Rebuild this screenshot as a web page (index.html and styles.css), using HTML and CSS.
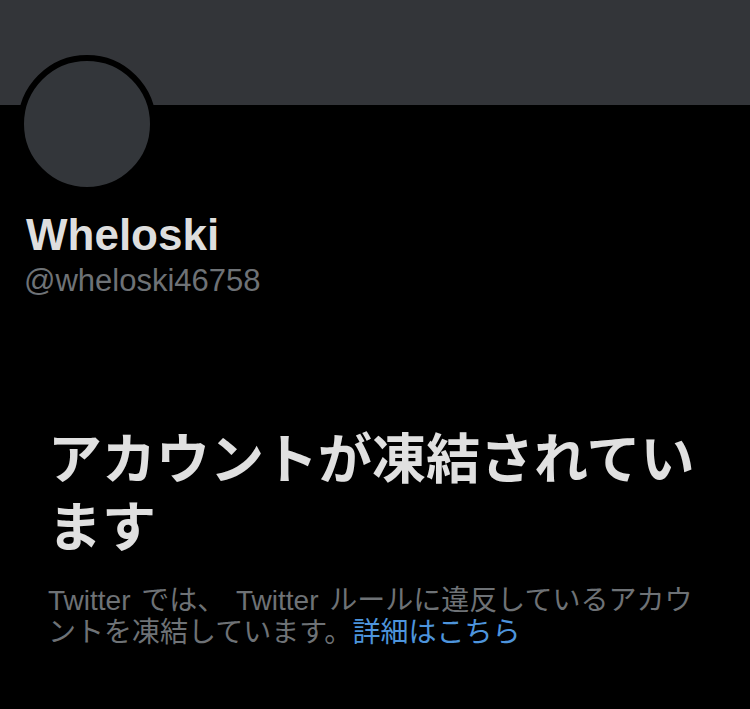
FILE: index.html
```html
<!DOCTYPE html>
<html lang="ja">
<head>
    <meta charset="UTF-8">
    <meta name="viewport" content="width=device-width, initial-scale=1.0">
    <title>Wheloski (@wheloski46758)</title>
    <link rel="stylesheet" href="styles.css">
</head>
<body>

    <!-- ヘッダー画像 -->
    <div class="banner"></div>

    <div class="profile">
        <div class="avatar"></div>
        <div class="name">Wheloski</div>
        <div class="handle">@wheloski46758</div>
    </div>

    <!-- 凍結メッセージ -->
    <div class="notice">
        <h1>アカウントが凍結されています</h1>
        <p>Twitter では、 Twitter ルールに違反しているアカウントを凍結しています。<a href="#">詳細はこちら</a></p>
    </div>

</body>
</html>
```

FILE: styles.css
```css
body {
    margin: 0;
    background-color: #000;
    font-family: "Liberation Sans", "Noto Sans CJK JP", sans-serif;
    overflow: hidden;
}
.banner {
    height: 105px;
    background-color: #333539;
}
.profile {
    padding: 0 24px;
}
.avatar {
    width: 126px;
    height: 126px;
    margin-top: -50px;
    margin-left: -6px;
    border: 6px solid #000;
    border-radius: 50%;
    background-color: #33363a;
}
.name {
    margin-top: 16px;
    padding-left: 2px;
    font-size: 44px;
    font-weight: bold;
    color: #dedede;
    line-height: 52px;
}
.handle {
    margin-top: 2px;
    font-size: 31px;
    color: #6e7276;
    line-height: 36px;
}
.notice {
    padding: 0 48px;
    margin-top: 127px;
}
h1 {
    margin: 0;
    font-size: 54px;
    line-height: 68px;
    font-weight: bold;
    color: #e0e0e0;
}
p {
    margin: 23px 0 0;
    font-size: 28px;
    line-height: 32px;
    word-spacing: 3px;
    color: #6e7276;
}
a {
    display: inline-block;
    color: #4d94dc;
    text-decoration: none;
}
```
